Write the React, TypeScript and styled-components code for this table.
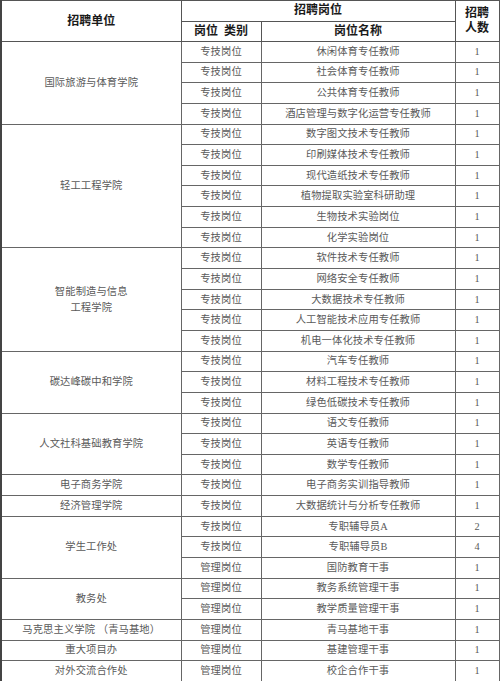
import React from "react";
import styled, { createGlobalStyle } from "styled-components";

const Global = createGlobalStyle`
  html, body { margin: 0; padding: 0; background: #fff; }
  body { font-family: "Liberation Serif", "Noto Sans CJK SC", serif; }
`;

const Table = styled.table`
  border-collapse: collapse;
  table-layout: fixed;
  width: 498px;
  border-left: 2px solid #444;
`;

const HeadCell = styled.th`
  border: 1px solid #555;
  padding: 0;
  height: 19.5px;
  font-size: 12px;
  line-height: 15px;
  font-weight: 700;
  color: #1a1a1a;
  text-align: center;
  vertical-align: middle;
  white-space: nowrap;
`;

const Row = styled.tr`
  height: 20.65px;
`;

const Cell = styled.td<{ $unit?: boolean }>`
  border: 1px solid #666;
  padding: 0;
  font-size: 10.3px;
  line-height: ${(p) => (p.$unit ? "16px" : "12px")};
  color: #5a5a5a;
  text-align: center;
  vertical-align: middle;
  white-space: nowrap;
  letter-spacing: 0.1px;
`;

type Job = { type: string; name: string; count: number };
type Group = { unit: React.ReactNode; jobs: Job[] };

const tech = (name: string, count = 1): Job => ({ type: "专技岗位", name, count });
const mgmt = (name: string, count = 1): Job => ({ type: "管理岗位", name, count });

const groups: Group[] = [
  {
    unit: "国际旅游与体育学院",
    jobs: [
      tech("休闲体育专任教师"),
      tech("社会体育专任教师"),
      tech("公共体育专任教师"),
      tech("酒店管理与数字化运营专任教师"),
    ],
  },
  {
    unit: "轻工工程学院",
    jobs: [
      tech("数字图文技术专任教师"),
      tech("印刷媒体技术专任教师"),
      tech("现代造纸技术专任教师"),
      tech("植物提取实验室科研助理"),
      tech("生物技术实验岗位"),
      tech("化学实验岗位"),
    ],
  },
  {
    unit: (
      <>
        智能制造与信息
        <br />
        工程学院
      </>
    ),
    jobs: [
      tech("软件技术专任教师"),
      tech("网络安全专任教师"),
      tech("大数据技术专任教师"),
      tech("人工智能技术应用专任教师"),
      tech("机电一体化技术专任教师"),
    ],
  },
  {
    unit: "碳达峰碳中和学院",
    jobs: [tech("汽车专任教师"), tech("材料工程技术专任教师"), tech("绿色低碳技术专任教师")],
  },
  {
    unit: "人文社科基础教育学院",
    jobs: [tech("语文专任教师"), tech("英语专任教师"), tech("数学专任教师")],
  },
  { unit: "电子商务学院", jobs: [tech("电子商务实训指导教师")] },
  { unit: "经济管理学院", jobs: [tech("大数据统计与分析专任教师")] },
  {
    unit: "学生工作处",
    jobs: [tech("专职辅导员A", 2), tech("专职辅导员B", 4), mgmt("国防教育干事")],
  },
  { unit: "教务处", jobs: [mgmt("教务系统管理干事"), mgmt("教学质量管理干事")] },
  { unit: "马克思主义学院 （青马基地）", jobs: [mgmt("青马基地干事")] },
  { unit: "重大项目办", jobs: [mgmt("基建管理干事")] },
  { unit: "对外交流合作处", jobs: [mgmt("校企合作干事")] },
];

export default function App() {
  return (
    <>
      <Global />
      <Table>
        <colgroup>
          <col style={{ width: 180 }} />
          <col style={{ width: 80 }} />
          <col style={{ width: 194 }} />
          <col style={{ width: 44 }} />
        </colgroup>
        <thead>
          <tr>
            <HeadCell rowSpan={2}>招聘单位</HeadCell>
            <HeadCell colSpan={2}>招聘岗位</HeadCell>
            <HeadCell rowSpan={2}>
              招聘
              <br />
              人数
            </HeadCell>
          </tr>
          <tr>
            <HeadCell>岗位&nbsp;&nbsp;类别</HeadCell>
            <HeadCell>岗位名称</HeadCell>
          </tr>
        </thead>
        <tbody>
          {groups.map((g, gi) =>
            g.jobs.map((j, ji) => (
              <Row key={`${gi}-${ji}`}>
                {ji === 0 && (
                  <Cell rowSpan={g.jobs.length} $unit>
                    {g.unit}
                  </Cell>
                )}
                <Cell>{j.type}</Cell>
                <Cell>{j.name}</Cell>
                <Cell>{j.count}</Cell>
              </Row>
            ))
          )}
        </tbody>
      </Table>
    </>
  );
}
